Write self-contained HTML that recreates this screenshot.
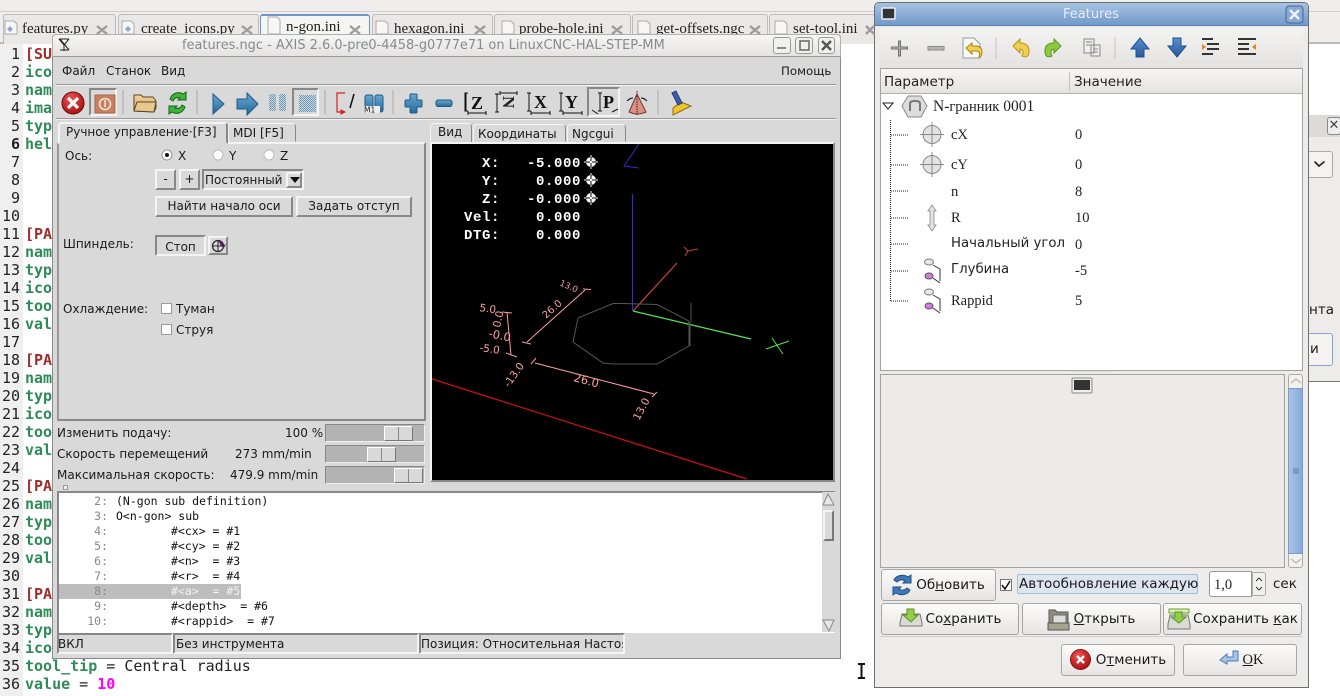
<!DOCTYPE html>
<html><head><meta charset="utf-8"><style>
html,body{margin:0;padding:0;width:1340px;height:696px;overflow:hidden;background:#fff}
div,span{position:absolute;box-sizing:border-box}
body{font-family:"DejaVu Sans",sans-serif;font-size:12px;color:#1a1a1a;position:relative}
.t{white-space:pre;line-height:16px}
.ed{left:25px;font:bold 15px/18px "DejaVu Sans Mono",monospace;white-space:pre;color:#2e8b57}
.r{color:#a52a2a}
.n{left:0;width:20px;text-align:right;font:15px/18px "DejaVu Sans Mono",monospace;color:#222}
.tab{top:14px;height:30px;background:#e9e8e6;border:1px solid #bbb;border-bottom:none;border-radius:3px 3px 0 0}
.tt{top:20px;font:15px/18px "Liberation Serif",serif;color:#222;white-space:pre}
.btn{border:2px solid;border-color:#f4f4f4 #888 #888 #f4f4f4;background:#d9d9d9;text-align:center;line-height:16px}
.mono{font:11.5px/15px "DejaVu Sans Mono",monospace;white-space:pre;color:#111}
.gn{left:59px;width:49px;text-align:right;color:#888}
.gb{background:linear-gradient(#fbfbfa,#e6e5e3);border:1px solid #a5a5a3;border-radius:3px;text-align:center;font-size:13.5px;line-height:30px;white-space:pre}
.sl{left:325px;width:100px;height:18px;background:#b3b3b3;border:1px solid;border-color:#888 #eee #eee #888}
.th{top:1px;width:29px;height:15px;background:#d9d9d9;border:1px solid;border-color:#fff #777 #777 #fff}
.s{font:14.5px/16px "Liberation Serif",serif;white-space:pre;color:#222}
.c{font-size:13.3px;white-space:pre;line-height:16px;color:#222}
</style></head><body>
<!-- background desktop strip -->
<div style="left:0;top:0;width:1340px;height:44px;background:#efeeec"></div>
<div style="left:0;top:11px;width:1340px;height:1px;background:#cfcecc"></div>
<div style="left:0;top:42px;width:1340px;height:2px;background:#bcbbb9"></div>
<div style="left:0;top:44px;width:23px;height:652px;background:#efefef"></div>

<div class="tab" style="left:3px;width:113px"></div>
<div class="tab" style="left:118px;width:141px"></div>
<div class="tab" style="left:260px;width:110px;background:#f5f5f4;border-color:#6d95c8;border-top:2px solid #6d95c8"></div>
<div class="tab" style="left:372px;width:121px"></div>
<div class="tab" style="left:494px;width:137px"></div>
<div class="tab" style="left:632px;width:136px"></div>
<div class="tab" style="left:769px;width:106px"></div>
<span class="tt" style="left:22px">features.py</span>
<span class="tt" style="left:141px">create_icons.py</span>
<span class="tt" style="left:286px;top:18px">n-gon.ini</span>
<span class="tt" style="left:394px">hexagon.ini</span>
<span class="tt" style="left:519px">probe-hole.ini</span>
<span class="tt" style="left:656px">get-offsets.ngc</span>
<span class="tt" style="left:793px">set-tool.ini</span>

<!-- editor -->
<div class="n" style="top:45px">1</div><div class="ed r" style="top:45px">[SU</div>
<div class="n" style="top:63px">2</div><div class="ed" style="top:63px">ico</div>
<div class="n" style="top:81px">3</div><div class="ed" style="top:81px">nam</div>
<div class="n" style="top:99px">4</div><div class="ed" style="top:99px">ima</div>
<div class="n" style="top:117px">5</div><div class="ed" style="top:117px">typ</div>
<div class="n" style="top:135px;font-weight:bold">6</div><div class="ed" style="top:135px">hel</div>
<div class="n" style="top:153px">7</div><div class="n" style="top:171px">8</div><div class="n" style="top:189px">9</div><div class="n" style="top:207px">10</div>
<div class="n" style="top:225px">11</div><div class="ed r" style="top:225px">[PA</div>
<div class="n" style="top:243px">12</div><div class="ed" style="top:243px">nam</div>
<div class="n" style="top:261px">13</div><div class="ed" style="top:261px">typ</div>
<div class="n" style="top:279px">14</div><div class="ed" style="top:279px">ico</div>
<div class="n" style="top:297px">15</div><div class="ed" style="top:297px">too</div>
<div class="n" style="top:315px">16</div><div class="ed" style="top:315px">val</div>
<div class="n" style="top:333px">17</div>
<div class="n" style="top:351px">18</div><div class="ed r" style="top:351px">[PA</div>
<div class="n" style="top:369px">19</div><div class="ed" style="top:369px">nam</div>
<div class="n" style="top:387px">20</div><div class="ed" style="top:387px">typ</div>
<div class="n" style="top:405px">21</div><div class="ed" style="top:405px">ico</div>
<div class="n" style="top:423px">22</div><div class="ed" style="top:423px">too</div>
<div class="n" style="top:441px">23</div><div class="ed" style="top:441px">val</div>
<div class="n" style="top:459px">24</div>
<div class="n" style="top:477px">25</div><div class="ed r" style="top:477px">[PA</div>
<div class="n" style="top:495px">26</div><div class="ed" style="top:495px">nam</div>
<div class="n" style="top:513px">27</div><div class="ed" style="top:513px">typ</div>
<div class="n" style="top:531px">28</div><div class="ed" style="top:531px">too</div>
<div class="n" style="top:549px">29</div><div class="ed" style="top:549px">val</div>
<div class="n" style="top:567px">30</div>
<div class="n" style="top:585px">31</div><div class="ed r" style="top:585px">[PA</div>
<div class="n" style="top:603px">32</div><div class="ed" style="top:603px">nam</div>
<div class="n" style="top:621px">33</div><div class="ed" style="top:621px">typ</div>
<div class="n" style="top:639px">34</div><div class="ed" style="top:639px">ico</div>
<div class="n" style="top:657px">35</div><div class="ed" style="top:657px">tool_tip<span style="position:static;color:#222;font-weight:normal"> = Central radius</span></div>
<div class="n" style="top:675px">36</div><div class="ed" style="top:675px">value<span style="position:static;color:#222;font-weight:normal"> = </span><span style="position:static;color:#f0f;font-weight:bold">10</span></div>

<!-- background dialog on right -->
<div style="left:1300px;top:115px;width:40px;height:267px;background:#edecea;border-bottom:1px solid #777"></div>
<div style="left:1300px;top:115px;width:40px;height:22px;background:#dcdbd9"></div>
<div style="left:1327px;top:117px;width:14px;height:18px;background:#eee;border:1px solid #888;border-radius:3px;font:bold 13px/16px 'DejaVu Sans';text-align:center;color:#444">✕</div>
<div style="left:1300px;top:151px;width:33px;height:27px;background:#f4f3f1;border:1px solid #aaa;border-radius:3px"></div>
<span class="t" style="left:1309px;top:302px;font-size:13.5px">нта</span>
<div style="left:1300px;top:333px;width:33px;height:33px;background:#f4f3f1;border:1px solid #86a5cc;border-radius:3px"></div>
<span class="t" style="left:1310px;top:341px;font-size:13.5px">и</span>

<!-- AXIS window -->
<div style="left:52px;top:34px;width:789px;height:625px;background:#d9d9d9;border:1px solid #8a8a8a;border-top:none;border-radius:4px 4px 0 0"></div>
<div style="left:52px;top:34px;width:789px;height:23px;background:linear-gradient(#f6f6f5,#e4e3e1);border:1px solid #b0b0b0;border-bottom:1px solid #9c9c9c;border-radius:4px 4px 0 0"></div>
<span class="t" style="left:182px;top:38px;font-size:12.93px;color:#858a90">features.ngc - AXIS 2.6.0-pre0-4458-g0777e71 on LinuxCNC-HAL-STEP-MM</span>
<div style="left:773px;top:37px;width:18px;height:17px;border:1px solid #999;border-radius:3px;background:#f0f0ef"></div>
<div style="left:795px;top:37px;width:18px;height:17px;border:1px solid #999;border-radius:3px;background:#f0f0ef"></div>
<div style="left:818px;top:37px;width:17px;height:17px;border:1px solid #999;border-radius:3px;background:#f0f0ef"></div>

<span class="t" style="left:62px;top:63px">Файл</span><span class="t" style="left:106px;top:63px">Станок</span><span class="t" style="left:161px;top:63px">Вид</span><span class="t" style="left:781px;top:63px;font-size:11.8px">Помощь</span>
<div style="left:56px;top:84px;width:780px;height:2px;background:#f2f2f2;border-top:1px solid #999"></div>
<div style="left:56px;top:118px;width:780px;height:2px;background:#f2f2f2;border-top:1px solid #999"></div>
<div style="left:89px;top:88px;width:28px;height:28px;border:2px solid;border-color:#888 #f4f4f4 #f4f4f4 #888;background:#d9d9d9"></div>
<div style="left:292px;top:88px;width:27px;height:28px;border:2px solid;border-color:#888 #f4f4f4 #f4f4f4 #888;background:#d9d9d9"></div>
<div style="left:587px;top:87px;width:33px;height:30px;border:2px solid;border-color:#888 #f4f4f4 #f4f4f4 #888;background:#d9d9d9"></div>

<!-- Manual panel -->
<div style="left:57px;top:142px;width:369px;height:279px;border:2px solid;border-color:#f4f4f4 #888 #888 #999;background:#d9d9d9"></div>
<div style="left:58px;top:122px;width:170px;height:22px;background:#d9d9d9;border:2px solid;border-color:#f4f4f4 #888 transparent #f4f4f4;border-radius:4px 4px 0 0"></div>
<div style="left:228px;top:123px;width:68px;height:19px;background:#d9d9d9;border:1px solid;border-color:#f4f4f4 #888 transparent #f4f4f4;border-radius:4px 4px 0 0"></div>
<span class="t" style="left:66px;top:124px">Ручное управление·[F3]</span>
<span class="t" style="left:233px;top:125px">MDI [F5]</span>
<span class="t" style="left:65px;top:148px">Ось:</span>
<span class="t" style="left:178px;top:148px">X</span><span class="t" style="left:229px;top:148px">Y</span><span class="t" style="left:280px;top:148px">Z</span>
<div class="btn" style="left:155px;top:169px;width:21px;height:21px">-</div>
<div class="btn" style="left:179px;top:169px;width:21px;height:21px">+</div>
<div style="left:202px;top:169px;width:102px;height:21px;border:2px solid;border-color:#888 #f4f4f4 #f4f4f4 #888;background:#d9d9d9"></div>
<span class="t" style="left:205px;top:172px">Постоянный</span>
<div class="btn" style="left:286px;top:172px;width:16px;height:16px"></div>
<div class="btn" style="left:155px;top:196px;width:138px;height:21px">Найти начало оси</div>
<div class="btn" style="left:296px;top:196px;width:116px;height:21px">Задать отступ</div>
<span class="t" style="left:63px;top:236px">Шпиндель:</span>
<div class="btn" style="left:155px;top:235px;width:51px;height:21px;border-color:#888 #f4f4f4 #f4f4f4 #888;padding-top:2px">Стоп</div>
<div class="btn" style="left:208px;top:236px;width:20px;height:19px"></div>
<span class="t" style="left:63px;top:301px">Охлаждение:</span>
<div style="left:161px;top:303px;width:11px;height:11px;background:#fff;border:1px solid #999"></div>
<div style="left:161px;top:324px;width:11px;height:11px;background:#fff;border:1px solid #999"></div>
<span class="t" style="left:176px;top:301px">Туман</span><span class="t" style="left:176px;top:322px">Струя</span>

<!-- sliders -->
<span class="t" style="left:57px;top:425px">Изменить подачу:</span><span class="t" style="left:285px;top:425px">100 %</span>
<span class="t" style="left:57px;top:446px">Скорость перемещений</span><span class="t" style="left:235px;top:446px">273 mm/min</span>
<span class="t" style="left:57px;top:467px">Максимальная скорость:</span><span class="t" style="left:230px;top:467px">479.9 mm/min</span>
<div class="sl" style="top:424px"><div class="th" style="left:58px"></div><div style="left:72px;top:2px;width:1px;height:13px;background:#888"></div></div>
<div class="sl" style="top:445px"><div class="th" style="left:41px"></div><div style="left:55px;top:2px;width:1px;height:13px;background:#888"></div></div>
<div class="sl" style="top:466px"><div class="th" style="left:68px"></div><div style="left:82px;top:2px;width:1px;height:13px;background:#888"></div></div>
<div style="left:63px;top:485px;width:5px;height:5px;background:#eee;border:1px solid #999"></div>

<!-- right tabs and canvas -->
<div style="left:430px;top:123px;width:42px;height:21px;background:#d9d9d9;border:1px solid;border-color:#f4f4f4 #888 transparent #f4f4f4;border-radius:4px 4px 0 0"></div>
<div style="left:473px;top:124px;width:93px;height:18px;border:1px solid;border-color:#f4f4f4 #888 transparent #f4f4f4;border-radius:4px 4px 0 0"></div>
<div style="left:567px;top:124px;width:59px;height:18px;border:1px solid;border-color:#f4f4f4 #888 transparent #f4f4f4;border-radius:4px 4px 0 0"></div>
<span class="t" style="left:438px;top:124px">Вид</span><span class="t" style="left:478px;top:126px">Координаты</span><span class="t" style="left:572px;top:126px">Ngcgui</span>
<div style="left:430px;top:142px;width:405px;height:340px;border:2px solid;border-color:#f4f4f4 #888 #888 #f4f4f4;background:#000"></div>

<!-- gcode -->
<div style="left:57px;top:491px;width:778px;height:142px;background:#fff;border-top:2px solid #888;border-left:2px solid #888"></div>
<div style="left:59px;top:584px;width:182px;height:15px;background:#bdbdbd"></div>
<div class="mono gn" style="top:494px">2:</div><div class="mono" style="left:116px;top:494px">(N-gon sub definition)</div>
<div class="mono gn" style="top:509px">3:</div><div class="mono" style="left:116px;top:509px">O&lt;n-gon&gt; sub</div>
<div class="mono gn" style="top:524px">4:</div><div class="mono" style="left:171px;top:524px">#&lt;cx&gt; = #1</div>
<div class="mono gn" style="top:539px">5:</div><div class="mono" style="left:171px;top:539px">#&lt;cy&gt; = #2</div>
<div class="mono gn" style="top:554px">6:</div><div class="mono" style="left:171px;top:554px">#&lt;n&gt;  = #3</div>
<div class="mono gn" style="top:569px">7:</div><div class="mono" style="left:171px;top:569px">#&lt;r&gt;  = #4</div>
<div class="mono gn" style="top:584px;color:#8a8a8a">8:</div><div class="mono" style="left:171px;top:584px;color:#f2f2f2">#&lt;a&gt;  = #5</div>
<div class="mono gn" style="top:599px">9:</div><div class="mono" style="left:171px;top:599px">#&lt;depth&gt;  = #6</div>
<div class="mono gn" style="top:614px">10:</div><div class="mono" style="left:171px;top:614px">#&lt;rappid&gt;  = #7</div>
<div style="left:822px;top:492px;width:13px;height:140px;background:#d9d9d9"></div>
<div style="left:823px;top:510px;width:11px;height:31px;background:#d9d9d9;border:2px solid;border-color:#f4f4f4 #777 #777 #f4f4f4"></div>

<!-- status -->
<div style="left:57px;top:633px;width:116px;height:21px;border:2px solid;border-color:#888 #f4f4f4 #f4f4f4 #888"></div>
<div style="left:173px;top:633px;width:246px;height:21px;border:2px solid;border-color:#888 #f4f4f4 #f4f4f4 #888"></div>
<div style="left:419px;top:633px;width:206px;height:21px;border:2px solid;border-color:#888 #f4f4f4 #f4f4f4 #888;overflow:hidden"><span class="t" style="left:0;top:1px">Позиция: Относительная Настоящая</span></div>
<span class="t" style="left:58px;top:636px">ВКЛ</span><span class="t" style="left:176px;top:636px">Без инструмента</span>

<!-- Features window -->
<div style="left:874px;top:2px;width:435px;height:686px;background:#edecea;border:1px solid #6f6f6f;border-radius:5px 5px 0 0"></div>
<div style="left:875px;top:3px;width:433px;height:23px;background:linear-gradient(#a6c2e3,#7199ca);border-radius:4px 4px 0 0;border-bottom:1px solid #5d80ab"></div>
<span class="t" style="left:1063px;top:7px;font-size:13px;color:#e7eef7">Features</span>
<div style="left:880px;top:28px;width:423px;height:40px;background:linear-gradient(#f3f3f1,#e3e2e0)"></div>
<div style="left:880px;top:68px;width:423px;height:303px;background:#fff;border:1px solid #a2a2a0"></div>
<div style="left:881px;top:69px;width:421px;height:25px;background:linear-gradient(#f6f6f5,#e4e3e1);border-bottom:1px solid #b0b0ae"></div>
<div style="left:1069px;top:72px;width:1px;height:19px;background:#c0c0be"></div>
<span class="c" style="left:884px;top:74px;font-size:13.5px">Параметр</span><span class="c" style="left:1074px;top:74px;font-size:13.5px">Значение</span>

<span class="s" style="left:933px;top:99px;font-size:15.5px">N-<span class="c" style="position:static;font-size:14.5px;font-family:'Liberation Serif',serif">гранник</span> 0001</span>
<span class="s" style="left:951px;top:127px">cX</span><span class="s" style="left:1075px;top:127px">0</span>
<span class="s" style="left:951px;top:157px">cY</span><span class="s" style="left:1075px;top:157px">0</span>
<span class="s" style="left:951px;top:184px">n</span><span class="s" style="left:1075px;top:184px">8</span>
<span class="s" style="left:951px;top:210px">R</span><span class="s" style="left:1075px;top:210px">10</span>
<span class="c" style="left:951px;top:236px">Начальный угол</span><span class="s" style="left:1075px;top:237px">0</span>
<span class="c" style="left:951px;top:262px">Глубина</span><span class="s" style="left:1075px;top:263px">-5</span>
<span class="s" style="left:951px;top:293px">Rappid</span><span class="s" style="left:1075px;top:293px">5</span>

<div style="left:880px;top:374px;width:405px;height:194px;background:#ecebe9;border:1px solid #a2a2a0"></div>
<div style="left:1288px;top:374px;width:15px;height:194px;background:#f2f1ef;border:1px solid #aaa;border-radius:3px"></div>
<div style="left:1288px;top:388px;width:15px;height:166px;background:linear-gradient(90deg,#a9c3e6,#85aade);border:1px solid #7d9ac2"></div>

<div class="gb" style="left:881px;top:569px;width:115px;height:32px;padding-left:24px">Об<u>н</u>овить</div>
<div style="left:1000px;top:579px;width:12px;height:12px;background:#fff;border:1px solid #777"></div>
<div style="left:1017px;top:574px;width:181px;height:20px;background:#dde5ef;border:1px solid #a5bbd6;border-radius:2px"></div>
<span class="t" style="left:1019px;top:576px;font-size:13.5px;line-height:17px">Автообновление каждую</span>
<div style="left:1209px;top:571px;width:43px;height:26px;background:#fff;border:1px solid #999;border-radius:3px 0 0 3px"></div>
<div style="left:1252px;top:572px;width:14px;height:24px;background:#f2f1ef;border:1px solid #aaa;border-radius:0 3px 3px 0"></div>
<span class="s" style="left:1214px;top:577px">1,0</span>
<span class="t" style="left:1273px;top:576px;font-size:13.5px">сек</span>
<div class="gb" style="left:881px;top:603px;width:138px;height:32px;padding-left:27px">Со<u>х</u>ранить</div>
<div class="gb" style="left:1022px;top:603px;width:139px;height:32px;padding-left:26px"><u>О</u>ткрыть</div>
<div class="gb" style="left:1163px;top:603px;width:139px;height:32px;padding-left:26px">Сохранить <u>к</u>ак</div>
<div style="left:880px;top:636px;width:423px;height:1px;background:#cfcecc"></div>
<div class="gb" style="left:1061px;top:644px;width:114px;height:32px;padding-left:26px">О<u>т</u>менить</div>
<div class="gb" style="left:1183px;top:644px;width:114px;height:32px;padding-left:26px;font-family:'Liberation Serif',serif;font-size:14.5px"><u>O</u>K</div>

<!-- all graphics overlay -->
<svg style="position:absolute;left:0;top:0" width="1340" height="696" viewBox="0 0 1340 696" fill="none">
<defs>
<radialGradient id="rd" cx=".4" cy=".3" r=".8"><stop offset="0" stop-color="#f05050"/><stop offset="1" stop-color="#a00c0c"/></radialGradient>
<linearGradient id="bl" x1="0" y1="0" x2="0" y2="1"><stop offset="0" stop-color="#6aa6cf"/><stop offset="1" stop-color="#246a9c"/></linearGradient>
<linearGradient id="bu" x1="0" y1="0" x2="0" y2="1"><stop offset="0" stop-color="#5c8fd0"/><stop offset="1" stop-color="#24589c"/></linearGradient>
<linearGradient id="fo" x1="0" y1="0" x2="0" y2="1"><stop offset="0" stop-color="#f2d49c"/><stop offset="1" stop-color="#cda267"/></linearGradient>
<pattern id="dt" width="2" height="2" patternUnits="userSpaceOnUse"><rect width="2" height="2" fill="#ccd8e0"/><rect width="1" height="1" fill="#6f97b4"/><rect x="1" y="1" width="1" height="1" fill="#6f97b4"/></pattern>
</defs>

<!-- tab doc icons and close x -->
<g stroke="#aaa" fill="#f6f6f6">
<path d="M5 21h9l3 3v10H5zM122 21h9l3 3v10h-12zM268 17h9l3 3v14h-12zM376 21h9l3 3v10h-12zM502 21h9l3 3v10h-12zM638 21h9l3 3v10h-12zM775 21h9l3 3v10h-12z"/>
</g>
<path d="M10 26l3 3-3 3-3-3zM128 26l3 3-3 3-3-3z" fill="#8ea6cf"/>
<g stroke="#9b9b9b" stroke-width="2.400">
<path d="M97 26l10 8M107 26l-10 8M242 26l10 8M252 26l-10 8M350 26l10 8M360 26l-10 8M475 26l10 8M485 26l-10 8M612 26l10 8M622 26l-10 8M750 26l10 8M760 26l-10 8M866 26l8 8M874 26l-8 8"/>
</g>
<path d="M59 39h10M59 39l5 6 5-6M64 45v6M60 50h9M60 39l9 11" stroke="#222"/>

<!-- axis window buttons -->
<path d="M777 48h9M800 41h9v9h-9z" stroke="#666" stroke-width="1.500"/>
<path d="M822 41l9 9M831 41l-9 9" stroke="#555" stroke-width="2.400"/>

<!-- axis toolbar -->
<circle cx="73" cy="103" r="11" fill="url(#rd)" stroke="#6d0808"/>
<path d="M68 98l10 10M78 98l-10 10" stroke="#fff" stroke-width="3.200"/>
<rect x="95" y="95" width="20" height="18" fill="#c6805f" stroke="#a9694c"/>
<circle cx="105" cy="104" r="5.500" stroke="#f0e0d4" stroke-width="1.600"/><path d="M105 100v7" stroke="#f0e0d4" stroke-width="1.600"/>
<path d="M123 90v24M197 90v24M325 90v24M393 90v24M658 90v24" stroke="#aaa"/>
<path d="M134 111V95h7l2 2h10l3 4v7l-2 4z" fill="url(#fo)" stroke="#5b4523"/>
<path d="M134 111l3-9h19l-2 10z" fill="#e9c88e" stroke="#5b4523"/>
<path d="M170 99c2-6 9-8 13-5l3-2v8h-8l2-2c-3-1-6 0-7 3zM185 107c-2 6-9 8-13 5l-3 2v-8h8l-2 2c3 1 6 0 7-3z" fill="#3db53d" stroke="#135f13"/>
<path d="M213 94l11 10-11 10z" fill="url(#bl)" stroke="#1d5c86"/>
<path d="M237 99h10v-6l11 11-11 11v-6h-10z" fill="url(#bl)" stroke="#1d5c86"/>
<rect x="269" y="94" width="7" height="17" rx="2" fill="url(#dt)"/><rect x="279" y="94" width="7" height="17" rx="2" fill="url(#dt)"/>
<rect x="299" y="95" width="17" height="17" fill="url(#dt)"/>
<path d="M345 93h-8v19h6" stroke="#d42020" stroke-width="1.200"/><path d="M341 110l4 2-4 2z" fill="#d42020" stroke="#d42020"/>
<path d="M350 108l4-14" stroke="#111" stroke-width="1.500"/>
<rect x="365" y="95" width="8" height="17" rx="2" fill="url(#bl)" stroke="#1d5c86"/><rect x="375" y="95" width="8" height="17" rx="2" fill="url(#bl)" stroke="#1d5c86"/>
<rect x="364" y="106" width="16" height="7" fill="#eee"/>
<text x="364" y="112.500" font-family="DejaVu Sans" font-size="7.500" fill="#111">M1</text>
<path d="M411 94h5a1 1 0 0 1 1 1v5h4a1 1 0 0 1 1 1v5a1 1 0 0 1-1 1h-4v5a1 1 0 0 1-1 1h-5a1 1 0 0 1-1-1v-5h-4a1 1 0 0 1-1-1v-5a1 1 0 0 1 1-1h4v-5a1 1 0 0 1 1-1z" fill="url(#bl)" stroke="#1d5c86"/>
<rect x="436" y="100" width="16" height="6.500" rx="2" fill="url(#bl)" stroke="#1d5c86"/>
<g stroke="#111">
<path d="M468 93h-3v18h3M468 113h18M468 111v4M486 111v4M466 93v18"/>
<path d="M497 94v18M495 94h4M495 112h4M500 93h17M500 91v4M517 91v4"/>
<path d="M529 93v18M527 93h4M527 111h4M531 113h19M531 111v4M550 111v4"/>
<path d="M561 93v18M559 93h4M559 111h4M563 113h19M563 111v4M582 111v4"/>
<path d="M600 93v18M598 93h4M598 111h4M592 110l6 4M612 112l6-3"/>
</g>
<text x="471" y="109" font-family="Liberation Serif" font-weight="bold" font-size="18" fill="#111">Z</text>
<text x="501" y="110" font-family="Liberation Serif" font-weight="bold" font-size="17" fill="#222" transform="rotate(90 509 104)">N</text>
<text x="534" y="108" font-family="Liberation Serif" font-weight="bold" font-size="18" fill="#111">X</text>
<text x="565" y="108" font-family="Liberation Serif" font-weight="bold" font-size="18" fill="#111">Y</text>
<text x="603" y="108" font-family="Liberation Serif" font-weight="bold" font-size="18" fill="#111">P</text>
<path d="M637 94l9 18q-9 4-17 0z" fill="#dc8f85" stroke="#6d3a34"/>
<path d="M637 91v25" stroke="#222" stroke-dasharray="1.500 1"/>
<path d="M627 101q3-3 6-3M647 101q-3-3-6-3" stroke="#222" stroke-width="1.200"/>
<path d="M681 102l10 4-18 9 0-7z" fill="#f0c52a" stroke="#8a6a10"/>
<path d="M672 93l4-2 6 12-4 2z" fill="#3a5fb0" stroke="#223a78"/>

<!-- radios -->
<circle cx="167" cy="155" r="5" fill="#fff" stroke="#999"/><circle cx="167" cy="155" r="2" fill="#111"/>
<circle cx="218" cy="155" r="5" fill="#fff" stroke="#bbb"/><circle cx="269" cy="155" r="5" fill="#fff" stroke="#bbb"/>
<path d="M290 177h10l-5 6z" fill="#111"/>
<circle cx="218" cy="246" r="5.500" stroke="#222" stroke-width="1.200" fill="#ddd"/><path d="M218 241v10M213 246h10" stroke="#222"/><path d="M218 240q5 0 6 5l2-1-2 4-3-2z" fill="#502060"/>

<!-- gcode scroll arrows -->
<path d="M823 505l5-11 6 11zM823 620l11 0-5 11z" fill="#e8e8e8" stroke="#888"/>

<!-- canvas -->
<g font-family="Liberation Mono" font-weight="bold" font-size="14" letter-spacing=".6" fill="#fff">
<text x="482" y="167">X:</text><text x="527" y="167">-5.000</text>
<text x="482" y="185">Y:</text><text x="536" y="185">0.000</text>
<text x="482" y="203">Z:</text><text x="527" y="203">-0.000</text>
<text x="464" y="221">Vel:</text><text x="536" y="221">0.000</text>
<text x="464" y="239">DTG:</text><text x="536" y="239">0.000</text>
</g>
<g>
<circle cx="591" cy="162" r="5" fill="#fff"/><circle cx="591" cy="180" r="5" fill="#fff"/><circle cx="591" cy="198" r="5" fill="#fff"/>
<path d="M591 155v14M584 162h14M591 173v14M584 180h14M591 191v14M584 198h14" stroke="#fff"/>
<path d="M591 157v4M591 163v4M586 162h4M592 162h4M591 175v4M591 181v4M586 180h4M592 180h4M591 193v4M591 199v4M586 198h4M592 198h4" stroke="#000"/>
</g>
<path d="M639 144l-15 22 15 2" stroke="#2a35c8"/>
<path d="M632.500 194V311" stroke="#2a35c8" stroke-width="1.200"/>
<path d="M633 311L677 263" stroke="#c94040" stroke-width="1.200"/>
<path d="M684 247l4 4M698 249l-10 2M688 251l-3 5" stroke="#c94040"/>
<path d="M633 311L751 339" stroke="#55e655" stroke-width="1.200"/>
<path d="M766 349l23-8M772 338l11 16" stroke="#55e655"/>
<path d="M613 303.500h10L657 304.500 689 321V346L657 364H613L603 363 573 342 578 318z" stroke="#555"/>
<path d="M691 303V322M690 322V346" stroke="#555"/>
<g stroke="#ff9e9e">
<path d="M527 342L585 290M522 342l9 2M583 289l8 .5"/>
<path d="M507 312L511 355M502 312l10 1M506 353l11 4"/>
<path d="M535 363L654 394M531 364l5-6M652 397l5-5"/>
</g>
<g font-family="DejaVu Sans" font-size="10.500" fill="#ff9e9e">
<text x="479" y="311" transform="rotate(8 479 311)">5.0</text>
<text x="479" y="351" transform="rotate(8 479 351)">-5.0</text>
<text x="488" y="337" transform="rotate(12 488 337)" font-size="11.500">-0.0</text>
<text x="500" y="328" transform="rotate(-78 500 328)">0.0</text>
<text x="559" y="285" transform="rotate(24 559 285)" font-size="8.500">13.0</text>
<text x="546" y="319" transform="rotate(-42 546 319)" font-size="10">26.0</text>
<text x="573" y="381" transform="rotate(15 573 381)" font-size="11.500">26.0</text>
<text x="509" y="388" transform="rotate(-55 509 388)">-13.0</text>
<text x="639" y="421" transform="rotate(-62 639 421)">13.0</text>
</g>
<path d="M432 379L747 479" stroke="#c81010" stroke-width="1.300"/>

<!-- features title icons -->
<rect x="882" y="8" width="13" height="11" rx="1" fill="#333" stroke="#e8eef6" stroke-width="1.600"/>
<rect x="1286" y="6" width="17" height="17" rx="3" fill="#85a8d6" stroke="#47668f"/>
<path d="M1290 10l9 9M1299 10l-9 9" stroke="#eef3fa" stroke-width="2.400"/>

<!-- features toolbar -->
<path d="M898.500 41h2v6h7v2h-7v7h-2v-7h-7v-2h7z" fill="#b5b5b3" stroke="#6e6e6c"/>
<rect x="928" y="46.500" width="16" height="3.500" fill="#b5b5b3" stroke="#8a8a88"/>
<path d="M963 38h11l6 6v14h-17z" fill="#f8f8f6" stroke="#999"/>
<path d="M966 48l6-5v3h5q5 1 5 6t-3 5q2-6-3-6h-4v3z" fill="#f2cf4c" stroke="#a58513"/>
<path d="M996 37v22M1115 37v22" stroke="#c5c4c2"/>
<path d="M1013 46l7-7v4q9 0 9 8t-7 5q3-6-2-7v4z" fill="#f2cf4c" stroke="#b69417"/>
<path d="M1061 46l-7-7v4q-9 0-9 8t7 5q-3-6 2-7v4z" fill="#8ccb3c" stroke="#5f9320"/>
<path d="M1084 39h10v14h-10zM1091 45h9v11h-9z" fill="#eee" stroke="#888"/>
<path d="M1086 42h6M1086 45h6M1093 49h5M1093 52h5" stroke="#888"/>
<path d="M1140 38l9 11h-5v8h-8v-8h-5z" fill="url(#bu)" stroke="#204f8a"/>
<path d="M1177 57l9-11h-5v-8h-8v8h-5z" fill="url(#bu)" stroke="#204f8a"/>
<path d="M1202 39h11M1207 44h12M1207 49h12M1202 54h11" stroke="#333" stroke-width="2"/><path d="M1202 44l4 3-4 3z" fill="#e8801a"/>
<path d="M1238 39h18M1238 44h11M1238 49h11M1238 54h18" stroke="#333" stroke-width="2"/><path d="M1256 44l-4 3 4 3z" fill="#e8801a"/>

<!-- tree -->
<path d="M883 103h10l-5 6z" fill="#fff" stroke="#222"/>
<path d="M890.500 120V301M891 135h17M891 165h17M891 191h17M891 218h17M891 244h17M891 271h17M891 301h17" stroke="#222" stroke-dasharray="1 1"/>
<path d="M908 96h13l6 10-6 11h-13l-6-11z" fill="#dcdcdc" stroke="#8a8a8a"/>
<path d="M910 111v-7q0-3 4-3h2q4 0 4 3v7" stroke="#777" stroke-width="2"/>
<circle cx="932" cy="134.500" r="9" fill="#e3e3e3" stroke="#888"/><path d="M932 122v25M920 134.500h24" stroke="#888"/>
<circle cx="932" cy="164.500" r="9" fill="#e3e3e3" stroke="#888"/><path d="M932 152v25M920 164.500h24" stroke="#888"/>
<path d="M932 205l4 6h-2v14h2l-4 6-4-6h2v-14h-2z" fill="#e3e3e3" stroke="#999"/>
<g>
<ellipse cx="929" cy="262" rx="4.500" ry="3" fill="#e8e8e8" stroke="#777"/><ellipse cx="929" cy="276" rx="4" ry="3" fill="#d37be0" stroke="#555"/>
<path d="M933 265l7 4v12M933 278l7 5" stroke="#333"/>
<ellipse cx="929" cy="292" rx="4.500" ry="3" fill="#e8e8e8" stroke="#777"/><ellipse cx="929" cy="306" rx="4" ry="3" fill="#d37be0" stroke="#555"/>
<path d="M933 295l7 4v12M933 308l7 5" stroke="#333"/>
</g>
<path d="M1068 371h46" stroke="#bbb" stroke-dasharray="1 1"/>
<rect x="1072" y="378" width="20" height="15" rx="1" fill="#eee" stroke="#888"/><rect x="1074" y="380" width="16" height="10" fill="#333"/>
<path d="M1291 383l5-4 5 4M1291 559l5 4 5-4" stroke="#b5b5b5" stroke-width="1.200"/>
<path d="M1293 469h6M1293 471h6M1293 473h6" stroke="#5e7fae"/>

<!-- features buttons icons -->
<path d="M894 580c2-5 10-6 14-3l3-2v8h-8l2-2c-3-2-6-1-8 1zM910 590c-2 5-10 6-14 3l-3 2v-8h8l-2 2c3 2 6 1 8-1z" fill="#3f78b8" stroke="#234f85"/>
<path d="M1002 585l3 4 5-8" stroke="#111" stroke-width="1.500"/>
<path d="M1256 581l3-3 3 3M1256 587l3 3 3-3" stroke="#333"/>
<path d="M902 614h18l2 9v3h-22v-3z" fill="#dbdbd6" stroke="#777"/><path d="M907 609h7v6h4l-7 7-8-7h4z" fill="#92d04a" stroke="#5d8f25"/>
<path d="M1049 610h6l2 2h11v18h-19z" fill="#8d8f7a" stroke="#555"/><rect x="1053" y="615" width="13" height="9" fill="#ddd" stroke="#666"/><path d="M1048 630v-7h21v7z" fill="#a3a58e" stroke="#555"/>
<path d="M1170 615h18l2 9v5h-22v-5z" fill="#dbdbd6" stroke="#777"/><rect x="1169" y="609" width="20" height="4" fill="#d8efb8" stroke="#6da030"/><path d="M1175 612h7v5h4l-7 6-8-6h4z" fill="#92d04a" stroke="#5d8f25"/>
<circle cx="1080.500" cy="659.500" r="10" fill="url(#rd)" stroke="#8a1010"/><path d="M1077 656l7 7M1084 656l-7 7" stroke="#fff" stroke-width="2.400"/>
<path d="M1220 660l7-6v3h6v-6h5v10h-11v3z" fill="#a7c5ea" stroke="#4f79b0"/>

<!-- right side chevron, cursor -->
<path d="M1315 162l4 4 5-4" stroke="#222" stroke-width="1.600" stroke-linecap="round"/>
<path d="M858 664h7M858 678h7M861.500 664v14" stroke="#111" stroke-width="2"/>
</svg>
</body></html>
